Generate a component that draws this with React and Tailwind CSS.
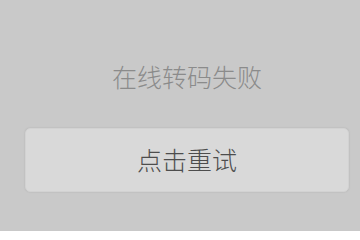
export default function App() {
  return (
    <div
      className="w-[360px] h-[231px] bg-[#c9c9c9] pl-[25px] pr-[11px] flex flex-col"
      style={{ fontFamily: '"Noto Sans CJK SC", "Noto Sans", sans-serif' }}
    >
      <div className="mt-[61px] h-[30px] leading-[30px] text-[25px] font-light text-center text-[#8b8b8b]">
        在线转码失败
      </div>
      <button className="mt-[37px] h-[64px] w-full rounded-[5px] bg-[#d9d9d9] border border-[#d2d2d2] shadow-[0_0_2px_rgba(0,0,0,0.12)] text-[25px] font-light text-[#4d4d4d] flex items-center justify-center">
        点击重试
      </button>
    </div>
  );
}
